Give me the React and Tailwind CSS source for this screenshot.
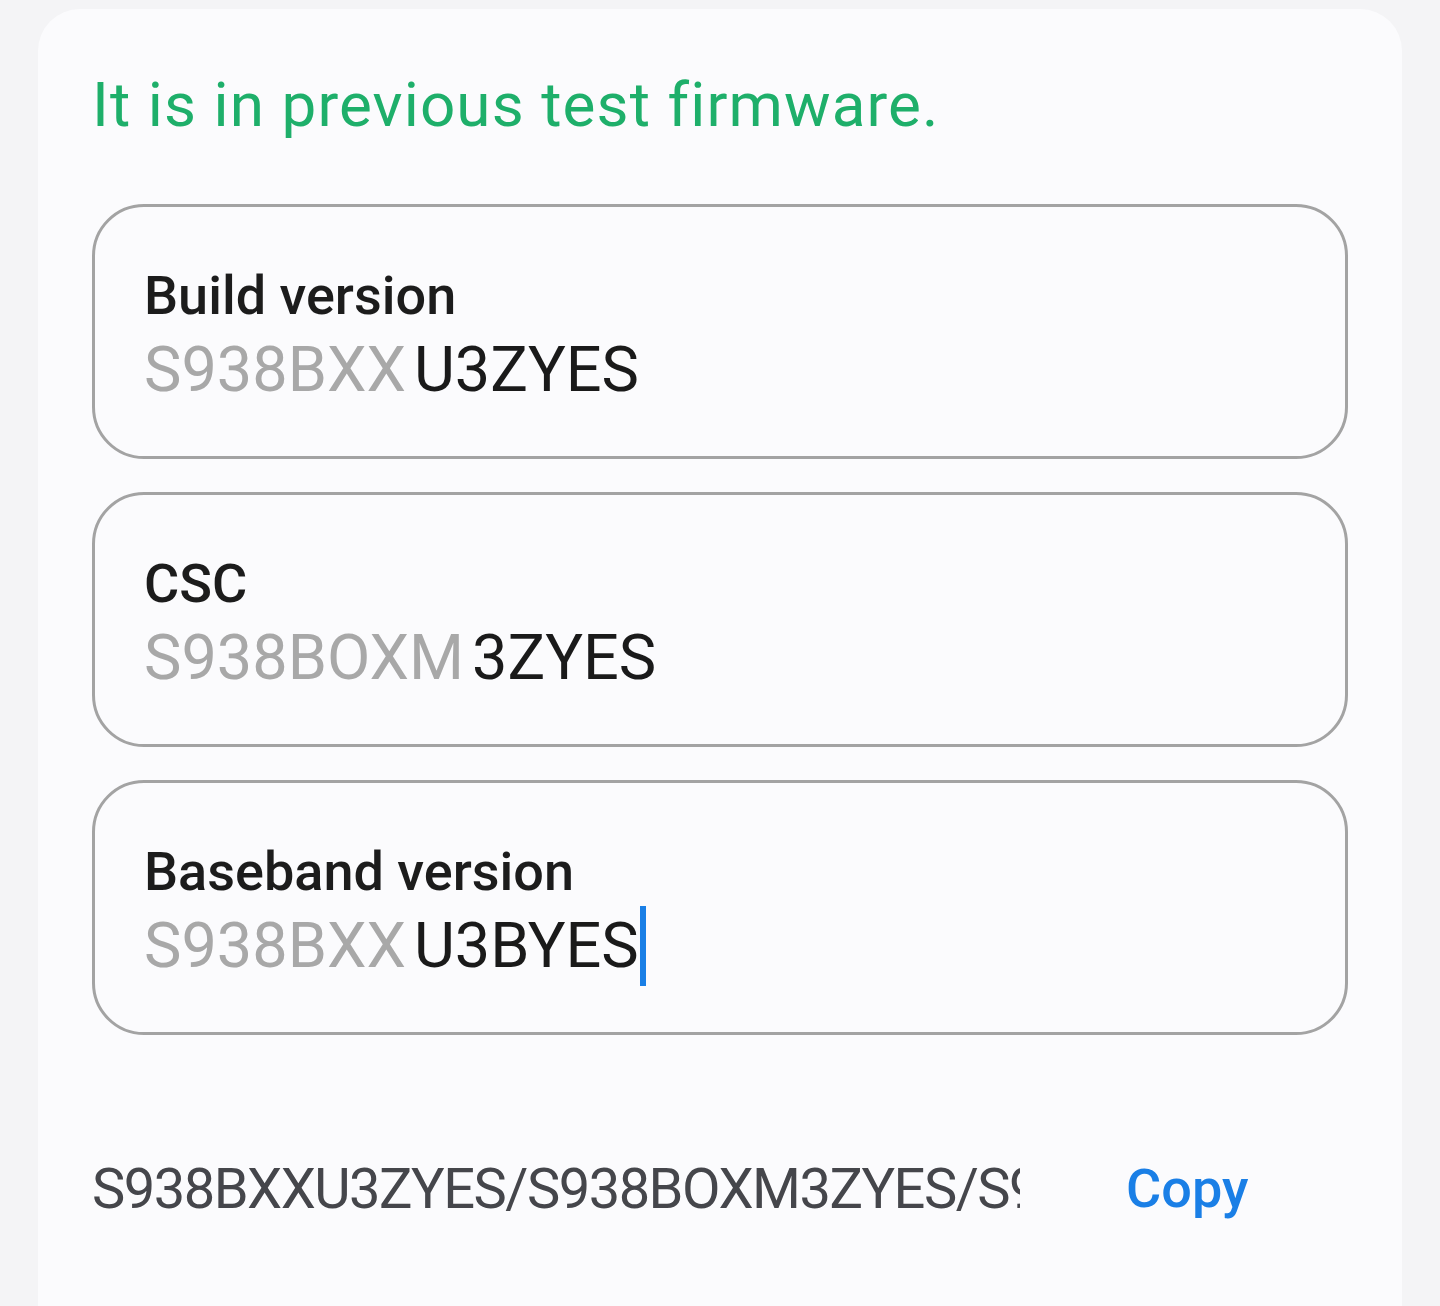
const fields = [
  { label: 'Build version', prefix: 'S938BXX', value: 'U3ZYES' },
  { label: 'CSC', prefix: 'S938BOXM', value: '3ZYES' },
  { label: 'Baseband version', prefix: 'S938BXX', value: 'U3BYES', caret: true },
]

function VersionField({ label, prefix, value, caret }) {
  return (
    <div className="h-[255px] rounded-[52px] border-[3px] border-[#a3a3a3] pl-[49px] pt-[55px]">
      <div className="text-[54px] leading-[68px] font-medium text-[#1c1c1c]">{label}</div>
      <div className="flex items-center text-[63px] leading-[80px]">
        <span className="text-[#a8a8a8]">{prefix}</span>
        <span className="ml-[8px] text-[#1a1a1a]">{value}</span>
        {caret && <span className="ml-[1px] h-[80px] w-[6px] bg-[#1a7fe6]" />}
      </div>
    </div>
  )
}

export default function App() {
  return (
    <div className="min-h-[1306px] bg-[#f4f4f6] px-[38px] pt-[9px] overflow-hidden" style={{ fontFamily: 'Roboto, "Noto Sans", sans-serif' }}>
      <div className="h-[1340px] rounded-t-[42px] bg-[#fbfbfd] px-[54px] pt-[61px]">
        <div className="text-[62px] leading-[70px] tracking-[1.1px] text-[#1eaf6a]">It is in previous test firmware.</div>

        <div className="mt-[64px] flex flex-col gap-[33px]">
          {fields.map(f => <VersionField key={f.label} {...f} />)}
        </div>

        <div className="mt-[119px] flex items-center">
          <div className="w-[928px] overflow-hidden whitespace-nowrap text-[56px] leading-[70px] text-[#45464b] tracking-[-1.5px]">
            S938BXXU3ZYES/S938BOXM3ZYES/S938BXXU3BYES
          </div>
          <button className="ml-[106px] text-[54px] leading-[70px] font-medium text-[#1a7fe6]">Copy</button>
        </div>
      </div>
    </div>
  )
}
